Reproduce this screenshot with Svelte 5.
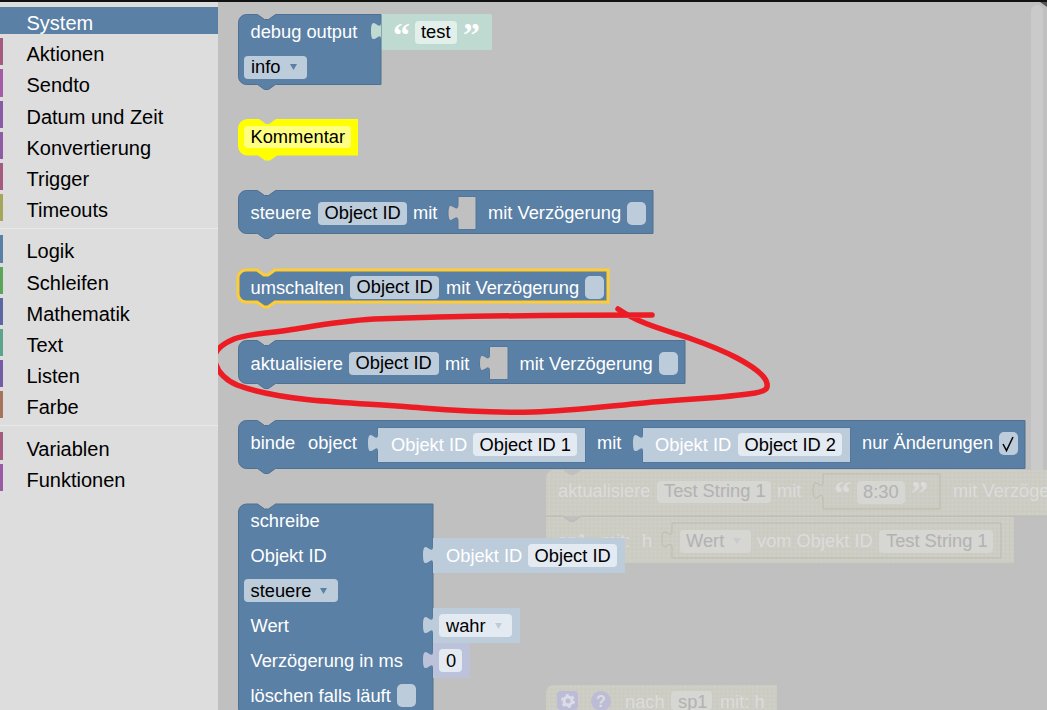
<script lang="ts">
    type Item = { label: string; color: string };

    const groups: Item[][] = [
        [
            { label: 'System', color: '#5b80a5' },
            { label: 'Aktionen', color: '#a55b80' },
            { label: 'Sendto', color: '#a55ba5' },
            { label: 'Datum und Zeit', color: '#8a5ba5' },
            { label: 'Konvertierung', color: '#8f5ba5' },
            { label: 'Trigger', color: '#a55b80' },
            { label: 'Timeouts', color: '#a5a55b' }
        ],
        [
            { label: 'Logik', color: '#5b80a5' },
            { label: 'Schleifen', color: '#5ba55b' },
            { label: 'Mathematik', color: '#5b67a5' },
            { label: 'Text', color: '#5ba58c' },
            { label: 'Listen', color: '#745ba5' },
            { label: 'Farbe', color: '#a5745b' }
        ],
        [
            { label: 'Variablen', color: '#a55b80' },
            { label: 'Funktionen', color: '#995ba5' }
        ]
    ];

    // block outline with the notch on top and the bump below
    function blockPath(x: number, y: number, w: number, h: number) {
        const top = `M${x} ${y + 8}a8 8 0 0 1 8 -8h11l7 5h4l7 -5H${x + w}`;
        const bottom = `V${y + h}H${x + 37}l-7 5h-4l-7 -5H${x + 8}a8 8 0 0 1 -8 -8z`;
        return top + bottom;
    }

    // puzzle tab of a value block, sticking out left of x
    function tab(x: number, y: number) {
        return `M${x} ${y}c0 12 -10 -10 -10 9s10 -3 10 9z`;
    }

    // socket in a block for a missing value
    function hole(x: number, y: number, w: number, h: number) {
        return `M${x + w} ${y}H${x}v8c0 11 -10 -9 -10 8.500s10 -3 10 8.500V${y + h}H${x + w}z`;
    }
</script>

<div class="page">
    <nav class="toolbox">
        {#each groups as group, i}
            {#if i > 0}<div class="sep"></div>{/if}
            {#each group as item, j}
                <div class="row" class:selected={i === 0 && j === 0}>
                    <span class="stripe" style="background:{item.color}"></span>
                    <span class="name">{item.label}</span>
                </div>
            {/each}
        {/each}
    </nav>

    <main class="workspace">
        <svg class="canvas" width="829" height="708" viewBox="218 2 829 708" xmlns="http://www.w3.org/2000/svg">
            <defs>
                <pattern id="hatch" width="6" height="6" patternUnits="userSpaceOnUse" patternTransform="rotate(45)">
                    <rect width="6" height="6" fill="#cececa" />
                    <rect width="3" height="3" fill="#cbcbbe" />
                    <rect x="3" y="3" width="3" height="3" fill="#cbcbbe" />
                </pattern>
            </defs>

            <!-- scrollbar -->
            <rect class="scroll" x="1031" y="5" width="12" height="486" rx="6" />
            <path d="M1040 2h7v5z" fill="#555" />

            <!-- ghost blocks behind the main stack -->
            <g>
                <path fill="url(#hatch)" d="M546 478a8 8 0 0 1 8 -8h9l7 5h4l7 -5H1047V516H546z" />
                <path fill="url(#hatch)" d="M546 517h17l7 5h4l7 -5H1014V563H546z" />
                <path class="ghost-line" d="M546 516h17l7 5h4l7 -5H1047" />
                <path fill="url(#hatch)" d="M546 693a8 8 0 0 1 8 -8H777V710H546z" />
                <path class="ghost-hole" d={hole(823, 474, 117, 35)} />
                <path class="ghost-hole" d={hole(672, 523, 329, 35)} />
                <rect class="ghost-field" x="657" y="481" width="114" height="22" rx="4" />
                <rect class="ghost-field" x="857" y="481" width="48" height="23" rx="4" />
                <rect class="ghost-field" x="680" y="530" width="71" height="23" rx="4" />
                <rect class="ghost-field" x="879" y="530" width="114" height="23" rx="4" />
                <rect class="ghost-field" x="671" y="691" width="41" height="19" rx="4" />
                <text class="ghost-text" x="558" y="497">aktualisiere</text>
                <text class="ghost-dim" x="664" y="497">Test String 1</text>
                <text class="ghost-text" x="777" y="497">mit</text>
                <text class="ghost-text big" x="834" y="504">“</text>
                <text class="ghost-dim" x="863" y="498">8:30</text>
                <text class="ghost-text big" x="911" y="504">”</text>
                <text class="ghost-text" x="953" y="497">mit Verzögerung</text>
                <text class="ghost-text" x="558" y="547">sp1</text>
                <text class="ghost-text" x="601" y="547">mit:</text>
                <text class="ghost-text" x="642" y="547">h</text>
                <text class="ghost-dim" x="686" y="547">Wert</text>
                <path d="M733 538h8l-4 6z" fill="#c8ccd0" />
                <text class="ghost-text" x="757" y="547">vom Objekt ID</text>
                <text class="ghost-dim" x="886" y="547">Test String 1</text>
                <rect x="557" y="691" width="21" height="19" rx="4" fill="#bcbcd6" />
                <circle class="gear" cx="568" cy="701" r="4" />
                <circle class="gear-teeth" cx="568" cy="701" r="6" />
                <circle cx="601" cy="701" r="10" fill="#bcbcd6" />
                <text class="ghost-q" x="601" y="707" text-anchor="middle">?</text>
                <text class="ghost-text" x="625" y="708">nach</text>
                <text class="ghost-dim" x="678" y="708">sp1</text>
                <text class="ghost-text" x="720" y="708">mit: h</text>
            </g>

            <!-- debug output -->
            <path class="tint-green" d="M381 14H490a2 2 0 0 1 2 2V50H381z" />
            <path class="block" d={blockPath(238.500, 14.500, 142.500, 70)} />
            <path class="tint-green" d={tab(381, 22)} />
            <text class="label" x="250.500" y="38">debug output</text>
            <rect class="field" x="244" y="56" width="63" height="23" rx="4" />
            <text class="dark" x="251" y="73">info</text>
            <path class="arrow" d="M290 64h7l-3.500 6z" />
            <text class="quote" x="393" y="46">“</text>
            <rect class="field-green" x="415" y="21" width="42" height="23" rx="4" />
            <text class="dark" x="421" y="38">test</text>
            <text class="quote" x="463" y="46">”</text>

            <!-- Kommentar -->
            <path class="block-yellow" d={blockPath(239.500, 120.500, 117, 33.500)} />
            <rect class="field-yellow" x="244" y="126" width="107" height="22" rx="4" />
            <text class="dark" x="250.500" y="143">Kommentar</text>

            <!-- steuere -->
            <path class="block" d={blockPath(238.500, 190.500, 414.500, 43)} />
            <text class="label" x="250.500" y="219">steuere</text>
            <rect class="field" x="318" y="202" width="89" height="23" rx="4" />
            <text class="dark" x="324.500" y="219">Object ID</text>
            <text class="label" x="413" y="219">mit</text>
            <path class="hole" d={hole(458, 196.500, 18, 33)} />
            <text class="label" x="488" y="219">mit Verzögerung</text>
            <rect class="field" x="627" y="202" width="19" height="23" rx="5" />

            <!-- umschalten, selected -->
            <path class="block-selected" d={blockPath(238, 270, 370, 32)} />
            <text class="label" x="250.500" y="294">umschalten</text>
            <rect class="field" x="350" y="276" width="89" height="23" rx="4" />
            <text class="dark" x="356.500" y="293">Object ID</text>
            <text class="label" x="446" y="294">mit Verzögerung</text>
            <rect class="field" x="585" y="276" width="19" height="23" rx="5" />

            <!-- aktualisiere -->
            <path class="block" d={blockPath(238.500, 340.500, 446.500, 43)} />
            <text class="label" x="250.500" y="370">aktualisiere</text>
            <rect class="field" x="349" y="352" width="90" height="23" rx="4" />
            <text class="dark" x="355.500" y="369">Object ID</text>
            <text class="label" x="445" y="370">mit</text>
            <path class="hole" d={hole(489.500, 346.500, 18.500, 33)} />
            <text class="label" x="519.500" y="370">mit Verzögerung</text>
            <rect class="field" x="659" y="352" width="19" height="23" rx="5" />

            <!-- binde -->
            <path class="block" d={blockPath(238.500, 420.500, 786.500, 48)} />
            <text class="label" x="250.500" y="449">binde</text>
            <text class="label" x="308" y="449">object</text>
            <rect class="tint-blue inset" x="377.500" y="427.500" width="208" height="35" />
            <path class="tint-blue" d={tab(378, 434)} />
            <text class="label" x="391" y="451">Objekt ID</text>
            <rect class="field-pale" x="473" y="433" width="104" height="23" rx="4" />
            <text class="dark" x="479.500" y="451">Object ID 1</text>
            <text class="label" x="597" y="449">mit</text>
            <rect class="tint-blue inset" x="642.500" y="427.500" width="208" height="35" />
            <path class="tint-blue" d={tab(643, 434)} />
            <text class="label" x="655" y="451">Objekt ID</text>
            <rect class="field-pale" x="738" y="433" width="104" height="23" rx="4" />
            <text class="dark" x="744.500" y="451">Object ID 2</text>
            <text class="label" x="862" y="449">nur Änderungen</text>
            <rect class="field" x="999" y="432" width="19" height="23" rx="5" />
            <path class="check" d="M1003 444l3.500 6.500L1013 437" />

            <!-- schreibe -->
            <path class="block" d="M238.500 512a8 8 0 0 1 8 -8h11l7 5h4l7 -5H433V716H246.500a8 8 0 0 1 -8 -8z" />
            <text class="label" x="250.500" y="527">schreibe</text>
            <text class="label" x="250.500" y="562">Objekt ID</text>
            <rect class="tint-blue" x="433" y="538" width="192" height="35" />
            <path class="tint-blue" d={tab(433, 546)} />
            <text class="label" x="446" y="562">Objekt ID</text>
            <rect class="field-pale" x="528" y="544" width="89" height="23" rx="4" />
            <text class="dark" x="534.500" y="562">Object ID</text>
            <rect class="field" x="244" y="579" width="94" height="23" rx="4" />
            <text class="dark" x="250.500" y="597">steuere</text>
            <path class="arrow" d="M320 588h7l-3.500 6z" />
            <text class="label" x="250.500" y="632">Wert</text>
            <rect class="tint-blue" x="433" y="608" width="87" height="35" />
            <path class="tint-blue" d={tab(433, 616)} />
            <rect class="field-pale" x="439" y="614" width="73" height="23" rx="4" />
            <text class="dark" x="446" y="632">wahr</text>
            <path class="arrow-pale" d="M495 623h7l-3.500 6z" />
            <text class="label" x="250.500" y="667">Verzögerung in ms</text>
            <rect class="tint-violet" x="433" y="643" width="37" height="35" />
            <path class="tint-violet" d={tab(433, 651)} />
            <rect class="field-pale" x="439" y="649" width="23" height="23" rx="4" />
            <text class="dark" x="446" y="667">0</text>
            <text class="label" x="250.500" y="702">löschen falls läuft</text>
            <rect class="field" x="397" y="684" width="19" height="23" rx="5" />

            <!-- red freehand circle -->
            <path class="marker" d="M652 315C560 315 460 316 374 319C340 321 315 326 289 330C262 334 246 334 234 339C220 345 212 352 215 362C218 373 226 380 237 385C258 393 282 397 311 400C345 403 385 405 422 408C460 411 495 413 533 412C570 411 610 406 644 403C685 399 725 398 755 393C765 391 768 389 767 384C766 375 752 366 737 358C722 350 706 344 689 338C665 330 640 324 618 309" />
        </svg>
    </main>
</div>

<style>
:global(body) {
    margin: 0;
}

.page {
    display: flex;
    width: 1047px;
    height: 710px;
    overflow: hidden;
    border-top: 2px solid #111;
    box-sizing: border-box;
    font-family: "Liberation Sans", Arial, sans-serif;
}

.toolbox {
    flex: none;
    width: 218px;
    padding-top: 5px;
    background: #ddd;
    box-sizing: border-box;
}

.row {
    display: flex;
    align-items: center;
    gap: 23.5px;
    height: 27.2px;
    margin-bottom: 4px;
    font-size: 20px;
    color: #000;
}

.name {
    padding-top: 6px;
}

.stripe {
    width: 3px;
    height: 100%;
}

.selected {
    background: #5b80a5;
    color: #fff;
}

.sep {
    height: 1px;
    margin: 7px 0 6px;
    background: #e8e8e8;
}

.workspace {
    flex: 1;
    background: #c0c0c0;
}

.canvas {
    display: block;
}

.canvas text {
    font-family: "Liberation Sans", Arial, sans-serif;
    font-size: 18.3px;
}

.scroll {
    fill: #cacaca;
}

.block {
    fill: #5b80a5;
    stroke: #4f7090;
    stroke-width: 1;
}

.block-selected {
    fill: #5b80a5;
    stroke: #fc3;
    stroke-width: 3;
}

.block-yellow {
    fill: #ffff00;
    stroke: #ffff00;
    stroke-width: 3;
}

.tint-green { fill: #bfdad0; }
.tint-blue { fill: #bdccdb; }
.tint-violet { fill: #bdc2db; }

.inset {
    stroke: #54779b;
    stroke-width: 1;
}

.hole {
    fill: #c0c0c0;
    stroke: #54779b;
    stroke-width: 1;
}

.field { fill: #bdccdb; }
.field-pale { fill: #e4eaf1; }
.field-green { fill: #e3efea; }
.field-yellow { fill: #ffff80; }

.arrow { fill: #5b80a5; }
.arrow-pale { fill: #bdccdb; }

.check {
    fill: none;
    stroke: #000;
    stroke-width: 1.5;
}

.label { fill: #fff; }
.dark { fill: #000; }

.canvas .quote {
    fill: #fff;
    font-family: "Liberation Serif", serif;
    font-size: 34px;
    font-weight: bold;
}

.marker {
    fill: none;
    stroke: #ec1c24;
    stroke-width: 5.5;
    stroke-linecap: round;
    stroke-linejoin: round;
}

.ghost-line {
    fill: none;
    stroke: #bcbcb0;
    stroke-width: 1;
}

.ghost-hole {
    fill: none;
    stroke: #bbbbae;
    stroke-width: 1;
}

.ghost-field { fill: #d6d6d3; }
.ghost-text { fill: #dcdcdc; }
.ghost-dim { fill: #b2b2b2; }

.gear {
    fill: none;
    stroke: #dcdce8;
    stroke-width: 3;
}

.gear-teeth {
    fill: none;
    stroke: #dcdce8;
    stroke-width: 2;
    stroke-dasharray: 3 3.3;
}

.canvas .big {
    font-family: "Liberation Serif", serif;
    font-size: 34px;
    font-weight: bold;
}

.canvas .ghost-q {
    fill: #dcdcdc;
    font-weight: bold;
    font-size: 16px;
}
</style>
